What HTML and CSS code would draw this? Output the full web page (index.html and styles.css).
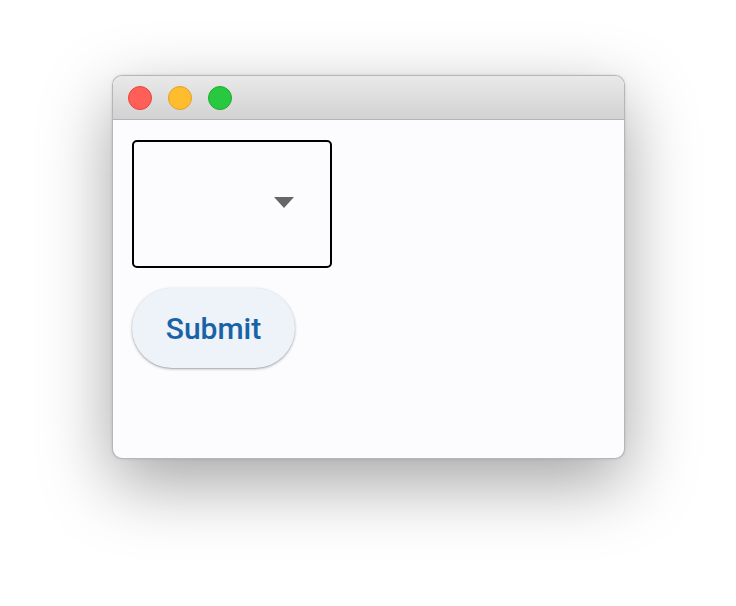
FILE: index.html
```html
<!DOCTYPE html>
<html>
<head>
<meta charset="utf-8">
<link rel="stylesheet" href="styles.css">
</head>
<body>
<div class="stage">
  <div class="window">
    <div class="titlebar">
      <span class="light red"></span>
      <span class="light yellow"></span>
      <span class="light green"></span>
    </div>
    <div class="content">
      <div class="select">
        <span class="arrow"></span>
      </div>
      <button class="submit">Submit</button>
    </div>
  </div>
</div>
</body>
</html>
```
FILE: styles.css
```css
html, body {
  margin: 0;
  padding: 0;
  background: #ffffff;
  font-family: Roboto, "Noto Sans", sans-serif;
}
.stage {
  width: 736px;
  height: 606px;
  box-sizing: border-box;
  padding: 75px 0 0 112px;
}
.window {
  width: 513px;
  height: 384px;
  box-sizing: border-box;
  border: 1px solid rgba(0, 0, 0, 0.28);
  border-radius: 10px;
  background: #fcfcfe;
  box-shadow: 0 24px 70px 0 rgba(0, 0, 0, 0.36), 0 0 3px rgba(0, 0, 0, 0.12);
  overflow: hidden;
  display: flex;
  flex-direction: column;
}
.titlebar {
  height: 43px;
  flex: none;
  background: linear-gradient(#e9e9e9, #d2d2d2);
  border-bottom: 1px solid #b4b4b4;
  display: flex;
  align-items: center;
  gap: 16px;
  padding-left: 15px;
}
.light {
  width: 24px;
  height: 24px;
  border-radius: 50%;
  box-sizing: border-box;
}
.red { background: #ff5f57; border: 1px solid #e2463f; }
.yellow { background: #febc2e; border: 1px solid #e1a325; }
.green { background: #28c840; border: 1px solid #1dad2b; }
.content {
  padding: 20px 19px;
  display: flex;
  flex-direction: column;
  align-items: flex-start;
  gap: 20px;
}
.select {
  width: 200px;
  height: 128px;
  box-sizing: border-box;
  border: 2px solid #000;
  border-radius: 5px;
  display: flex;
  align-items: center;
  justify-content: flex-end;
  padding: 0 36px 3px 0;
}
.arrow {
  width: 0;
  height: 0;
  border-left: 10px solid transparent;
  border-right: 10px solid transparent;
  border-top: 11px solid #666666;
}
.submit {
  width: 163px;
  height: 80px;
  border: none;
  border-radius: 40px;
  background: #eef2f9;
  color: #1863a6;
  font-family: Roboto, "Noto Sans", sans-serif;
  font-weight: 500;
  font-size: 30px;
  padding: 0;
  box-shadow: 0 1px 3px rgba(0, 0, 0, 0.3), 0 1px 1px rgba(0, 0, 0, 0.1);
}
```
